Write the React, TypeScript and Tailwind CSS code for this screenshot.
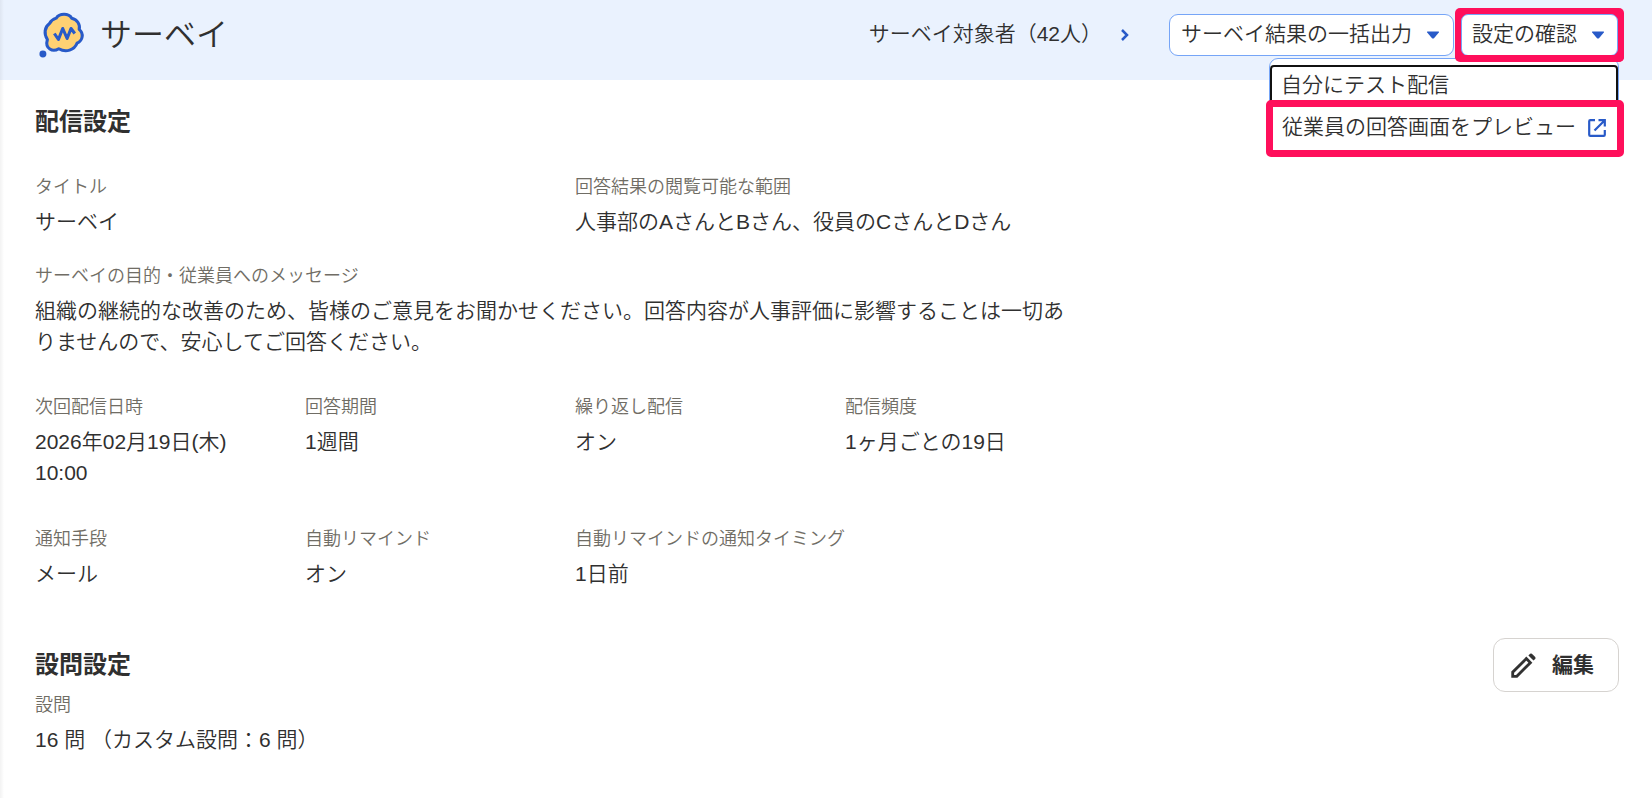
import type { ReactNode } from 'react';

function SurveyLogo() {
  return (
    <svg className="h-[46px] w-[47px] shrink-0" viewBox="0 0 46 46" preserveAspectRatio="none" fill="none">
      <path
        d="M17.8 6.200C21 1 30 1 33 6.200C38.500 7.500 41.500 12.500 40.300 17.400C45 21.500 44 28.600 38.200 31.200C35.500 38 27.500 41 20.300 36.700C14.500 40.500 6.500 37 9.200 27.500C5.600 22 6.300 15 11.300 11.500C12.500 9 14.500 7.300 17.800 6.200Z"
        fill="#ffd173"
        stroke="#285ac8"
        strokeWidth="3"
        strokeLinejoin="round"
      />
      <path d="M16 21.500L20 27.500L24.200 16.500L28.500 26.500L32.300 16.500L36 21.500" stroke="#285ac8" strokeWidth="3" strokeLinejoin="round" />
      <circle cx="4.800" cy="42" r="3.400" fill="#285ac8" />
    </svg>
  );
}

function Caret() {
  return (
    <svg className="h-[8px] w-[14px] shrink-0" viewBox="0 0 14 8" fill="#285ac8">
      <path d="M1.500 0.500H12.500Q13.300 0.700 12.800 1.500L8 7.200Q7 8 6 7.200L1.200 1.500Q0.700 0.700 1.500 0.500Z" />
    </svg>
  );
}

function Field({ label, wide, children }: { label: string; wide?: boolean; children: ReactNode }) {
  return (
    <div className={wide ? 'col-span-2' : ''}>
      <dt className="text-[18px] leading-[27px] whitespace-nowrap text-[#706d65]">{label}</dt>
      <dd className="mt-[5px] text-[21px] leading-[31.5px]">{children}</dd>
    </div>
  );
}

export default function App() {
  return (
    <div className="relative h-[798px] w-[1652px] overflow-hidden bg-white font-['Liberation_Sans','Noto_Sans_CJK_JP',sans-serif] font-[350] text-[#303030]">
      <header className="flex h-[80px] items-start bg-[#eaf2fe] pl-[38px]">
        <div className="flex pt-[12px]">
          <SurveyLogo />
          <h1 className="ml-[15px] text-[32px] leading-[46px]">サーベイ</h1>
        </div>
        <div className="ml-auto flex pt-[8px] pr-[28px]">
          <a className="mt-[6px] flex h-[42px] items-center text-[21px] whitespace-nowrap">
            <span className="pb-[2px]">サーベイ対象者（42人）</span>
            <svg className="mr-[39px] ml-[18px] h-[14px] w-[10px]" viewBox="0 0 10 14" fill="none" stroke="#285ac8" strokeWidth="2.500">
              <path d="M2 2L7 7L2 12" />
            </svg>
          </a>
          <button className="mt-[6px] flex h-[42px] w-[285px] items-center justify-between rounded-[9px] border border-[#76a5f7] bg-white pr-[13px] pl-[11px] text-[21px] whitespace-nowrap">
            <span className="pb-[2px]">サーベイ結果の一括出力</span>
            <Caret />
          </button>
          <div className="ml-[1px] h-[54px] w-[169px] rounded-[5px] bg-[#ff0f5b] p-[6px]">
            <button className="flex h-[42px] w-[157px] items-center justify-between rounded-[7px] border border-[#76a5f7] bg-white pr-[12px] pl-[10px] text-[21px] whitespace-nowrap">
              <span className="pb-[2px]">設定の確認</span>
              <Caret />
            </button>
          </div>
        </div>
      </header>

      <div className="absolute top-[58px] left-[1269px] h-[92px] w-[350px] rounded-[9px] border border-[#76a5f7] bg-white pt-[6px] text-[21px]">
        <div className="flex h-[43px] items-center rounded-[4px] border-2 border-[#111] pb-[3px] pl-[9px]">自分にテスト配信</div>
      </div>
      <div className="absolute top-[100px] left-[1266px] flex h-[57px] w-[358px] items-center rounded-[5px] border-[7px] border-[#ff0f5b] bg-white pr-[10px] pb-[2px] pl-[9px] text-[21px] whitespace-nowrap">
        <span className="pb-[1px]">従業員の回答画面をプレビュー</span>
        <svg className="ml-auto h-[20px] w-[20px] shrink-0" viewBox="0 0 20 20" fill="none" stroke="#285ac8" strokeWidth="2.200">
          <path d="M8 2.200H3.300Q2.200 2.200 2.200 3.300V16.700Q2.200 17.800 3.300 17.800H16.700Q17.800 17.800 17.800 16.700V12M11.500 2.200H17.800V8.500M17.800 2.200L7.500 12.500" />
        </svg>
      </div>
      <div className="absolute top-[55px] left-[1455px] h-[7px] w-[169px] rounded-b-[5px] bg-[#ff0f5b]" />
      <div className="absolute top-0 left-0 h-full w-[4px] bg-gradient-to-r from-black/5 to-transparent" />

      <main className="px-[35px] pt-[24px]">
        <h2 className="text-[24px] leading-[36px] font-bold">配信設定</h2>
        <dl className="mt-[34px] grid w-[1080px] grid-cols-4">
          <Field label="タイトル" wide>サーベイ</Field>
          <Field label="回答結果の閲覧可能な範囲" wide>人事部のAさんとBさん、役員のCさんとDさん</Field>
        </dl>
        <dl className="mt-[25px] w-[1030px]">
          <Field label="サーベイの目的・従業員へのメッセージ">
            組織の継続的な改善のため、皆様のご意見をお聞かせください。回答内容が人事評価に影響することは一切ありませんので、安心してご回答ください。
          </Field>
        </dl>
        <dl className="mt-[36px] grid w-[1080px] grid-cols-4 gap-y-[37px]">
          <Field label="次回配信日時">
            2026年02月19日(木)
            <br />
            10:00
          </Field>
          <Field label="回答期間">1週間</Field>
          <Field label="繰り返し配信">オン</Field>
          <Field label="配信頻度">1ヶ月ごとの19日</Field>
          <Field label="通知手段">メール</Field>
          <Field label="自動リマインド">オン</Field>
          <Field label="自動リマインドの通知タイミング" wide>1日前</Field>
        </dl>
        <div className="mt-[49px] -mr-[2px] flex h-[54px] items-center justify-between">
          <h2 className="text-[24px] leading-[36px] font-bold">設問設定</h2>
          <button className="flex h-[54px] w-[126px] items-center rounded-[12px] border border-[#d6d3d0] bg-white pl-[17px] text-[21px] font-bold">
            <svg className="mr-[16px] h-[25px] w-[25px] shrink-0" viewBox="0 0 25 25" fill="none" stroke="#323232" strokeWidth="2.800">
              <path d="M1.700 23.300V19.200L15.300 5.600L19.400 9.700L5.800 23.300Z" />
              <path d="M17.400 2.500L19.100 0.800Q20 0 20.900 0.800L24.200 4.100Q25 5 24.200 5.900L22.500 7.600Z" fill="#323232" stroke="none" />
            </svg>
            編集
          </button>
        </div>
        <dl>
          <Field label="設問">16 問 （カスタム設問：6 問）</Field>
        </dl>
      </main>
    </div>
  );
}
